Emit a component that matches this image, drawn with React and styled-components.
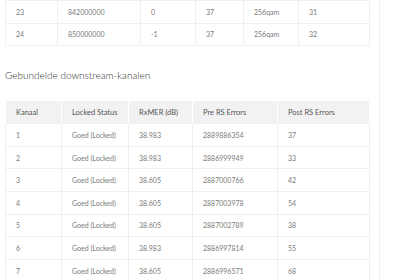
import React from 'react';
import styled, { createGlobalStyle } from 'styled-components';

const Global = createGlobalStyle`
  html, body {
    margin: 0;
    padding: 0;
    background: #fff;
    font-family: Lato, "Open Sans", sans-serif;
  }
`;

const Page = styled.div`
  display: flex;
  width: 400px;
  height: 280px;
  overflow: hidden;
`;

const Main = styled.div`
  width: 364px;
  padding: 0 10px 0 5px;
  flex-shrink: 0;
`;

const Sidebar = styled.div`
  flex: 1;
  border-left: 1px solid #f1f1f1;
`;

const Table = styled.table`
  width: 364px;
  border-collapse: collapse;
  table-layout: fixed;
  font-size: 7px;
`;

const Th = styled.th`
  height: 22px;
  padding: 0 0 0 10px;
  text-align: left;
  font-weight: 400;
  font-size: 7.5px;
  color: #555;
  background: #f2f2f2;
  border: 1px solid #fff;
  border-bottom: none;
  border-top: none;
`;

const Td = styled.td`
  height: 22.6px;
  padding: 0 0 0 10px;
  color: #7a7a7a;
  border: 1px solid #efefef;
  box-sizing: border-box;
  white-space: nowrap;
`;

const Heading = styled.h2`
  margin: 23px 0 20px;
  font-size: 10px;
  line-height: 12px;
  font-weight: 300;
  color: #333;
`;

const upstream = [
  ['23', '842000000', '0', '37', '256qam', '31'],
  ['24', '850000000', '-1', '37', '256qam', '32'],
];

const bonded = [
  ['1', 'Goed (Locked)', '38.983', '2889886354', '37'],
  ['2', 'Goed (Locked)', '38.983', '2886999949', '33'],
  ['3', 'Goed (Locked)', '38.605', '2887000766', '42'],
  ['4', 'Goed (Locked)', '38.605', '2887003978', '54'],
  ['5', 'Goed (Locked)', '38.605', '2887002789', '38'],
  ['6', 'Goed (Locked)', '38.983', '2886997814', '55'],
  ['7', 'Goed (Locked)', '38.605', '2886996571', '68'],
];

const topCols = [52, 83, 55, 48, 55, 71];
const bottomCols = [56, 67, 64, 85, 92];

export default function App() {
  return (
    <Page>
      <Global />
      <Main>
        <Table>
          <colgroup>
            {topCols.map((w, i) => <col key={i} style={{ width: w }} />)}
          </colgroup>
          <tbody>
            {upstream.map(r => (
              <tr key={r[0]}>
                {r.map((c, i) => <Td key={i}>{c}</Td>)}
              </tr>
            ))}
          </tbody>
        </Table>
        <Heading>Gebundelde downstream-kanalen</Heading>
        <Table>
          <colgroup>
            {bottomCols.map((w, i) => <col key={i} style={{ width: w }} />)}
          </colgroup>
          <thead>
            <tr>
              <Th>Kanaal</Th>
              <Th>Locked Status</Th>
              <Th>RxMER (dB)</Th>
              <Th>Pre RS Errors</Th>
              <Th>Post RS Errors</Th>
            </tr>
          </thead>
          <tbody>
            {bonded.map(r => (
              <tr key={r[0]}>
                {r.map((c, i) => <Td key={i}>{c}</Td>)}
              </tr>
            ))}
          </tbody>
        </Table>
      </Main>
      <Sidebar />
    </Page>
  );
}
